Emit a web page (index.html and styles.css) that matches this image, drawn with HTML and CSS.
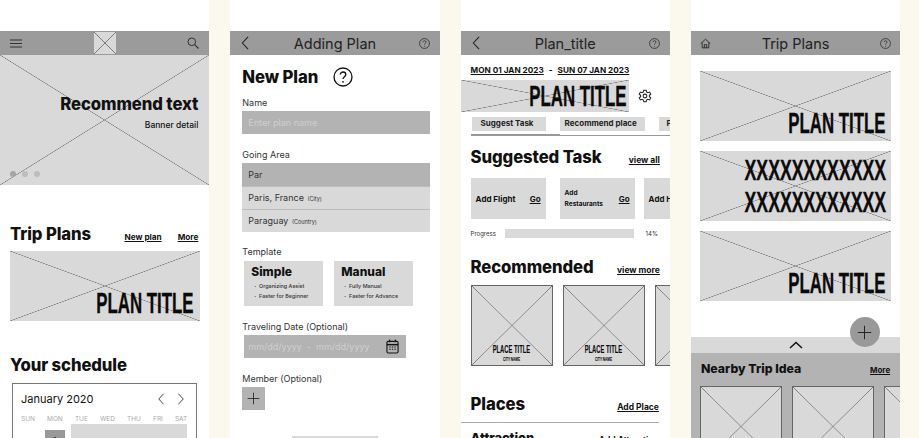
FILE: index.html
```html
<!DOCTYPE html>
<html lang="en">
<head>
  <meta charset="UTF-8" />
  <title>Trip planner wireframes</title>
  <link rel="stylesheet" href="styles.css">
</head>
<body>

<!-- shared icons -->
<svg class="sprite" width="0" height="0">
  <symbol id="i-help" viewBox="0 0 20 20">
    <circle cx="10" cy="10" r="9" fill="none" stroke="currentColor" stroke-width="1.3"/>
    <path d="M7.3 7.6c0-1.6 1.2-2.6 2.8-2.6s2.7 1 2.7 2.4c0 2.200-2.800 2.300-2.800 4.600" fill="none" stroke="currentColor" stroke-width="1.3"/>
    <circle cx="10" cy="14.800" r=".9" fill="currentColor"/>
  </symbol>
  <symbol id="i-back" viewBox="0 0 10 16">
    <path d="M8.500 1 2 8l6.500 7" fill="none" stroke="currentColor" stroke-width="1.200"/>
  </symbol>
  <symbol id="i-plus" viewBox="0 0 20 20">
    <path d="M10 1v18M1 10h18" fill="none" stroke="currentColor" stroke-width="1.300"/>
  </symbol>
</svg>

<div class="board">

  <!-- home -->
  <section class="screen">
    <header class="topbar">
      <svg class="burger" viewBox="0 0 12 9"><path d="M0 1h12M0 4.500h12M0 8h12" stroke="#333" stroke-width="1.200"/></svg>
      <div class="logo ph"></div>
      <svg class="search" viewBox="0 0 12 12"><circle cx="4.800" cy="4.800" r="3.800" fill="none" stroke="#333" stroke-width="1"/><path d="M7.700 7.700 11.500 11.500" stroke="#333" stroke-width="1.200"/></svg>
    </header>
    <div class="banner ph">
      <div class="banner-title">Recommend text</div>
      <div class="banner-detail">Banner detail</div>
      <div class="dots"><span class="dot on"></span><span class="dot"></span><span class="dot"></span></div>
    </div>
    <div class="sec-head home-plans">
      <h2>Trip Plans</h2>
      <div class="links"><a>New plan</a><a>More</a></div>
    </div>
    <div class="plan ph home-plan"><span class="display">PLAN TITLE</span></div>
    <h2 class="home-schedule">Your schedule</h2>
    <div class="calendar">
      <div class="cal-head">
        <span>January 2020</span>
        <span class="cal-nav"><svg viewBox="0 0 10 16"><use href="#i-back"/></svg><svg class="flip" viewBox="0 0 10 16"><use href="#i-back"/></svg></span>
      </div>
      <div class="cal-days"><span>SUN</span><span>MON</span><span>TUE</span><span>WED</span><span>THU</span><span>FRI</span><span>SAT</span></div>
      <div class="cal-body">
        <div class="cal-one">1</div>
        <div class="cal-range"></div>
      </div>
    </div>
  </section>

  <!-- adding plan -->
  <section class="screen">
    <header class="topbar titled">
      <svg class="back"><use href="#i-back"/></svg>
      <div class="bar-title">Adding Plan</div>
      <svg class="help"><use href="#i-help"/></svg>
    </header>
    <div class="form">
      <div class="form-title"><h2>New Plan</h2><svg><use href="#i-help"/></svg></div>
      <label>Name</label>
      <div class="field dim">Enter plan name</div>
      <label class="gap-area">Going Area</label>
      <div class="field">Par</div>
      <div class="option">Paris, France <small>(City)</small></div>
      <div class="option">Paraguay <small>(Country)</small></div>
      <label class="gap-template">Template</label>
      <div class="templates">
        <div class="template"><h3>Simple</h3><ul><li>Organizing Assist</li><li>Faster for Beginner</li></ul></div>
        <div class="template"><h3>Manual</h3><ul><li>Fully Manual</li><li>Faster for Advance</li></ul></div>
      </div>
      <label class="gap-date">Traveling Date (Optional)</label>
      <div class="field dim date">
        <span>mm/dd/yyyy&nbsp; - &nbsp;mm/dd/yyyy</span>
        <svg viewBox="0 0 14 16"><rect x="1" y="2.500" width="12" height="12.500" rx="1.500" fill="none" stroke="#111" stroke-width="1.200"/><path d="M1 6h12" stroke="#111" stroke-width="1.600"/><path d="M4 .5v3M10 .5v3" stroke="#111" stroke-width="1.200"/><path d="M3.500 8.500h7M3.500 11h7" stroke="#111" stroke-width="1.200" stroke-dasharray="1.500 1.250"/></svg>
      </div>
      <label class="gap-member">Member (Optional)</label>
      <div class="add-box"><svg><use href="#i-plus"/></svg></div>
      <div class="submit"></div>
    </div>
  </section>

  <!-- plan detail -->
  <section class="screen">
    <header class="topbar titled">
      <svg class="back"><use href="#i-back"/></svg>
      <div class="bar-title">Plan_title</div>
      <svg class="help"><use href="#i-help"/></svg>
    </header>
    <div class="dates"><a>MON 01 JAN 2023</a><span>-</span><a>SUN 07 JAN 2023</a></div>
    <div class="hero">
      <div class="ph hero-img"><span class="display">PLAN TITLE</span></div>
      <svg class="gear" viewBox="0 0 24 24" fill="none" stroke="#222" stroke-width="1.800"><circle cx="12" cy="12" r="3.200"/><path d="M10 2h4l.6 3 2.400 1.300 2.900-1 2 3.400-2.300 2v2.600l2.300 2-2 3.400-2.900-1-2.400 1.300-.6 3h-4l-.6-3-2.400-1.300-2.900 1-2-3.400 2.300-2v-2.600l-2.300-2 2-3.400 2.900 1L9.400 5z"/></svg>
    </div>
    <div class="tabs">
      <span class="tab t1">Suggest Task</span><span class="tab t2">Recommend place</span><span class="tab t3">Places</span>
    </div>
    <div class="tab-line"></div>
    <div class="sec-head task-head"><h2>Suggested Task</h2><a>view all</a></div>
    <div class="tasks">
      <div class="task"><b>Add Flight</b><a>Go</a></div>
      <div class="task"><b class="two">Add<br>Restaurants</b><a>Go</a></div>
      <div class="task"><b>Add Hotel</b><a>Go</a></div>
    </div>
    <div class="progress"><span class="progress-label">Progress</span><div class="track"></div><span>14%</span></div>
    <div class="sec-head rec-head"><h2>Recommended</h2><a>view more</a></div>
    <div class="places">
      <div class="place ph"><span class="display">PLACE TITLE</span><span class="display city">CITY NAME</span></div>
      <div class="place ph"><span class="display">PLACE TITLE</span><span class="display city">CITY NAME</span></div>
      <div class="place ph"></div>
    </div>
    <div class="sec-head places-head"><h2>Places</h2><a>Add Place</a></div>
    <div class="rule"></div>
    <div class="sec-head attr-head"><h2>Attraction</h2><a>Add Attraction</a></div>
  </section>

  <!-- trip plans -->
  <section class="screen">
    <header class="topbar titled">
      <svg class="home" viewBox="0 0 14 14" fill="none" stroke="#222" stroke-width="1.100"><path d="M1 7 7 1.500 13 7M2.800 5.800V12.500h8.400V5.800M5.500 12.500V8.500h3v4"/></svg>
      <div class="bar-title">Trip Plans</div>
      <svg class="help"><use href="#i-help"/></svg>
    </header>
    <div class="plan-list">
      <div class="plan ph"><span class="display">PLAN TITLE</span></div>
      <div class="plan ph long"><span class="display">XXXXXXXXXXXX<br>XXXXXXXXXXXX</span></div>
      <div class="plan ph"><span class="display">PLAN TITLE</span></div>
    </div>
    <div class="fab"><svg><use href="#i-plus"/></svg></div>
    <div class="handle"><svg viewBox="0 0 14 8"><path d="M1 7 7 1.500 13 7" fill="none" stroke="#111" stroke-width="1.500"/></svg></div>
    <div class="drawer">
      <div class="sec-head"><h2>Nearby Trip Idea</h2><a>More</a></div>
      <div class="places nearby">
        <div class="place ph"></div>
        <div class="place ph"></div>
        <div class="place ph"></div>
      </div>
    </div>
  </section>

</div>

</body>
</html>
```

FILE: styles.css
```css
* { box-sizing: border-box; }

html, body {
  margin: 0;
  height: 438px;
  overflow: hidden;
  background: #fbf8ee;
  font-family: Inter, "Liberation Sans", sans-serif;
  color: #111;
}

.sprite { position: absolute; }

.board {
  display: flex;
  gap: 21px;
  height: 438px;
}
.screen {
  position: relative;
  flex: none;
  width: 209.300px;
  height: 438px;
  padding-top: 31px;
  background: #fff;
  overflow: hidden;
}

/* placeholder box with the X through it */
.ph {
  background-color: #d9d9d9;
  background-image:
    linear-gradient(to top right, transparent calc(50% - 0.6px), #7d7d7d 50%, transparent calc(50% + 0.6px)),
    linear-gradient(to bottom right, transparent calc(50% - 0.6px), #7d7d7d 50%, transparent calc(50% + 0.6px));
}

/* no condensed poster font here, so squeeze a bold one */
.display {
  display: inline-block;
  font-family: "Liberation Sans", sans-serif;
  font-weight: 700;
  color: #0b0b0b;
  white-space: nowrap;
  -webkit-text-stroke: 0.35px #0b0b0b;
  transform: scaleX(0.58);
  transform-origin: right center;
}

h2 { margin: 0; font-size: 16.700px; line-height: 20px; font-weight: 800; letter-spacing: -0.1px; }
a { font-weight: 600; text-decoration: underline; }

.topbar {
  display: flex;
  align-items: center;
  justify-content: space-between;
  height: 24px;
  background: #9b9b9b;
}
.titled {
  display: grid;
  grid-template-columns: 30px 1fr 30px;
  justify-items: center;
}
.bar-title { font-size: 14.500px; font-weight: 400; color: #222; }
.burger { width: 12px; height: 9px; margin-left: 10px; }
.logo { width: 22px; height: 22px; }
.search { width: 12px; height: 12px; margin-right: 10px; }
.back { width: 10px; height: 14px; color: #222; }
.help { width: 11px; height: 11px; color: #222; }
.home { width: 11px; height: 11px; }

.sec-head {
  display: flex;
  align-items: baseline;
  justify-content: space-between;
}

/* home */
.banner {
  height: 130px;
  padding: 37px 11px 0 0;
  text-align: right;
}
.banner-title { font-size: 16.700px; line-height: 24px; font-weight: 800; letter-spacing: -0.1px; }
.banner-detail { margin-top: 3px; font-size: 8.500px; line-height: 12px; font-weight: 500; }
.dots { display: flex; gap: 6px; margin: 40px 0 0 10px; }
.dot { width: 6px; height: 6px; border-radius: 50%; background: #bdbdbd; }
.dot.on { background: #a5a5a5; }

.home-plans { margin: 39px 11px 0 10px; }
.links { display: flex; gap: 16px; }
.links a { font-size: 8.200px; font-weight: 700; }

.plan {
  display: flex;
  align-items: flex-end;
  justify-content: flex-end;
  height: 70px;
  padding: 0 6px 6px 0;
  text-align: right;
}
.plan .display { font-size: 29px; line-height: 24px; }
.home-plan { margin: 7px 9.300px 0 10px; }
.home-schedule { margin: 34px 0 0 10px; }

.calendar {
  margin: 8px 12px 0 12px;
  height: 80px;
  padding: 8px 9px 8px 8px;
  border: 1px solid #777;
}
.cal-head { display: flex; justify-content: space-between; align-items: center; font-size: 11px; line-height: 14px; font-weight: 400; }
.cal-nav { display: flex; gap: 10px; margin-right: 1px; }
.cal-nav svg { width: 10px; height: 12px; color: #333; }
.flip { transform: scaleX(-1); }
.cal-days { display: flex; justify-content: space-between; margin: 9px 0 0 0; font-size: 6.500px; line-height: 8px; color: #aaa; }
.cal-body { display: flex; margin: 1px 0 0 0; align-items: flex-start; }
.cal-one { width: 20px; height: 20px; margin: 6px 6px 0 24px; background: #999; text-align: center; font-size: 8px; line-height: 20px; }
.cal-range { flex: 1; height: 30px; background: #d9d9d9; }

/* adding plan */
.form { padding: 12px 9.300px 0 12px; }
.form-title { display: flex; align-items: center; gap: 15px; height: 20px; }
.form-title svg { width: 20px; height: 20px; }
label { display: block; margin-top: 10px; font-size: 9px; line-height: 11px; color: #333; }
.field {
  display: flex;
  align-items: center;
  height: 23px;
  margin-top: 3px;
  padding-left: 6px;
  background: #b3b3b3;
  font-size: 9px;
  color: #333;
}
.dim { color: #cfcfcf; }
.option {
  height: 23px;
  padding-left: 6px;
  background: #d9d9d9;
  border-top: 1px solid #bdbdbd;
  font-size: 9px;
  line-height: 21px;
  color: #333;
}
.option small { margin-left: 1px; font-size: 5.500px; }
.gap-area { margin-top: 15px; }
.gap-template { margin-top: 14px; }
.gap-date { margin-top: 15px; }
.gap-member { margin-top: 15px; }
.templates { display: flex; gap: 11px; margin: 4px 0 0 2px; }
.template { width: 79px; height: 45px; padding: 4px 7px; background: #d9d9d9; }
.template h3 { margin: 0; font-size: 12px; line-height: 14px; font-weight: 800; }
.template ul { margin: 3px 0 0; padding: 0 0 0 3px; list-style: none; font-size: 5.400px; line-height: 9.500px; color: #333; font-weight: 500; white-space: nowrap; }
.template li::before { content: "\00b7"; margin-right: 3px; font-weight: 700; }
.date { width: 162px; margin: 3px 0 0 2px; padding: 0 4px; justify-content: space-between; font-size: 9px; }
.date svg { width: 13px; height: 15px; margin-right: 3px; }
.add-box { display: flex; align-items: center; justify-content: center; width: 23px; height: 23px; margin-top: 3px; background: #b3b3b3; }
.add-box svg { width: 13px; height: 13px; color: #222; }
.submit { width: 86px; height: 20px; margin: 26px 0 0 50px; background: #d9d9d9; }

/* plan detail */
.dates { display: flex; gap: 5px; margin: 10px 0 0 10px; font-size: 8.200px; line-height: 11px; }
.dates a { font-weight: 700; }
.dates span { font-weight: 700; }
.hero { display: flex; align-items: center; margin-top: 4px; }
.hero-img { display: flex; justify-content: flex-end; align-items: center; width: 168px; height: 32px; padding-right: 2px; }
.hero-img .display { font-size: 29px; line-height: 32px; }
.gear { width: 14px; height: 14px; margin-left: 9px; }
.tabs { display: flex; margin: 5px 0 0 11px; white-space: nowrap; }
.tab { flex: none; display: block; height: 14px; padding: 0 0 0 9px; background: #d9d9d9; font-size: 8px; line-height: 13px; font-weight: 700; color: #222; }
.t1 { width: 74px; }
.t2 { width: 85px; margin-left: 14px; padding: 0 0 0 5px; }
.t3 { margin-left: 14px; padding: 0 0 0 8px; }
.tab-line { height: 3px; margin: 3px 0 0 10px; background: linear-gradient(#999, #999) 0 0 / 89px 2px no-repeat, linear-gradient(#999, #999) 0 1px / 100% 1px no-repeat; }
.task-head { margin: 10px 10px 0 10px; }
.task-head a, .rec-head a { font-size: 8.500px; font-weight: 700; }
.tasks { display: flex; gap: 14px; margin: 11px 0 0 10px; }
.task { flex: none; display: flex; align-items: center; justify-content: space-between; width: 75px; height: 41px; padding: 0 5px; background: #d9d9d9; font-size: 8px; }
.task a { font-weight: 700; font-size: 8px; }
.task .two { font-size: 6.500px; line-height: 11px; }
.tasks .task:last-child { margin-left: -5px; }
.progress { display: flex; align-items: center; margin: 10px 11px 0 10px; font-size: 6px; color: #333; }
.progress-label { width: 34px; }
.track { width: 129px; height: 9px; margin-right: 12px; background: #d9d9d9; }
.rec-head { margin: 19px 10px 0 10px; }
.places { display: flex; gap: 10px; margin: 8px 0 0 10px; }
.place {
  flex: none;
  display: flex;
  flex-direction: column;
  align-items: center;
  justify-content: flex-end;
  width: 82px;
  height: 81px;
  padding-bottom: 1px;
  border: 1px solid #666;
}
.place .display { font-size: 11px; line-height: 12px; -webkit-text-stroke: 0.1px #0b0b0b; transform: scaleX(0.53); transform-origin: center; }
.place .city { font-size: 6px; line-height: 9px; transform: scaleX(0.52); }
.places-head { margin: 28px 11px 0 10px; }
.places-head a { font-size: 8.500px; font-weight: 700; }
.rule { height: 1px; margin: 8px 11px 0 0; background: #aaa; }
.attr-head { margin: 5px 11px 0 10px; }
.attr-head h2 { font-size: 13px; }
.attr-head a { font-size: 8.500px; font-weight: 700; }

/* trip plans */
.plan-list { display: flex; flex-direction: column; gap: 10px; margin: 16px 9px 0; }
.long { padding: 0 5px 0 0; align-items: center; }
.long .display { font-size: 29px; line-height: 32px; transform: scaleX(0.61); }
.fab {
  position: absolute;
  top: 317px;
  left: 159px;
  display: flex;
  align-items: center;
  justify-content: center;
  width: 30px;
  height: 30px;
  border-radius: 50%;
  background: #999;
}
.fab svg { width: 15px; height: 15px; color: #222; }
.handle { display: flex; align-items: center; justify-content: center; height: 16px; margin-top: 36px; background: #d9d9d9; }
.handle svg { width: 14px; height: 8px; }
.drawer { height: 100px; padding: 6px 0 0 9px; background: #b3b3b3; }
.drawer .sec-head { margin: 0 10px 0 1px; }
.drawer h2 { font-size: 12.300px; letter-spacing: 0; }
.drawer a { font-size: 8px; font-weight: 700; }
.nearby { margin: 7px 0 0 0; }
```
